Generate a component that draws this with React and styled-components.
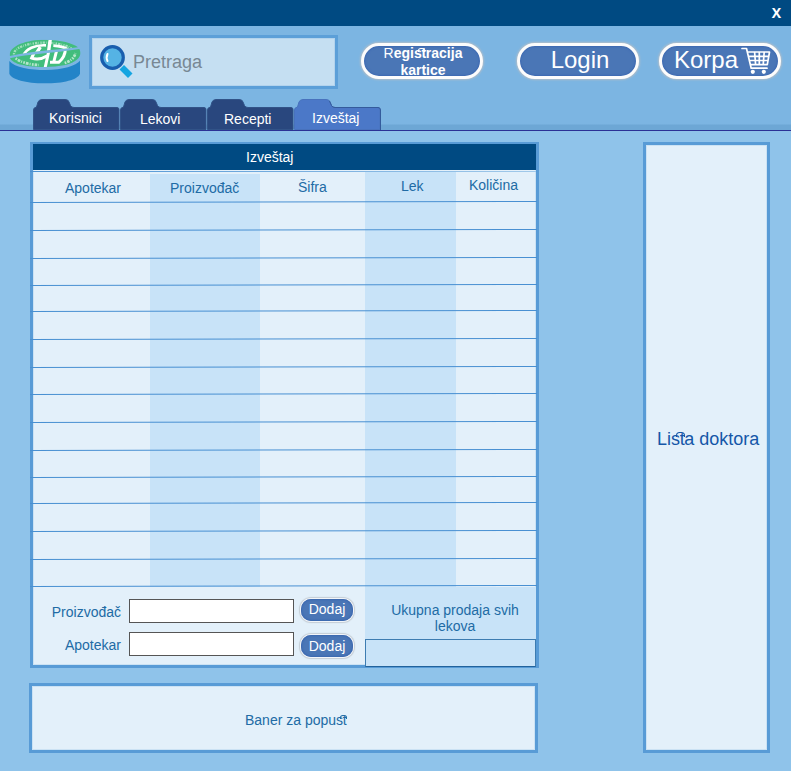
import React from "react";
import styled, { createGlobalStyle } from "styled-components";

const GlobalStyle = createGlobalStyle`
  * { box-sizing: border-box; }
  body { margin: 0; font-family: "Liberation Sans", Arial, sans-serif; font-size: 14px; line-height: 16px; }
`;

const Window = styled.div`
  width: 791px;
  height: 771px;
  display: flex;
  flex-direction: column;
  overflow: hidden;
  background: #8fc3ea;
`;

const TitleBar = styled.div`
  height: 26px;
  flex: none;
  display: flex;
  justify-content: flex-end;
  padding: 5px 10px 0 0;
  background: #004a82;
`;

const CloseButton = styled.button`
  border: 0;
  padding: 0;
  height: 16px;
  background: none;
  color: #fff;
  font: bold 14px/16px "Open Sans", "Liberation Sans", sans-serif;
`;

const Header = styled.header`
  height: 105px;
  flex: none;
  display: flex;
  flex-direction: column;
  justify-content: space-between;
  border-bottom: 1px solid #2b3196;
  background: linear-gradient(#7cb5e2 98px, #6da7d5 99px);
`;

const Toolbar = styled.div`
  display: flex;
  align-items: flex-start;
  padding-left: 8px;
`;

const LogoBox = styled.div`
  width: 74px;
  height: 47px;
  margin: 12px 7px 0 0;
  svg { display: block; }
`;

const Search = styled.label`
  width: 249px;
  height: 54px;
  margin: 9px 23px 0 0;
  padding: 7px 0 0 8px;
  display: flex;
  border: 3px solid #5c9fd8;
  box-shadow: inset 0 0 0 1px #b3d3ed;
  background: #c5dff2;
  color: #788894;
  font-size: 18px;
  line-height: 20px;
  svg { display: block; flex: none; }
`;

const SearchText = styled.span`
  padding-top: 7px;
`;

const Pill = styled.button`
  width: 122px;
  height: 36px;
  margin: 17px ${(p) => p.$gap || 0}px 0 0;
  padding: ${(p) => p.$pad || "0"};
  display: flex;
  align-items: flex-start;
  justify-content: ${(p) => (p.$start ? "flex-start" : "center")};
  border: 3px solid #fcfcfc;
  border-radius: 18px;
  background: #4a76b6;
  box-shadow: 0 0 2px 1px #b2bec9, inset 0 0 2px 1px #3e69b2;
  color: #fff;
  font: ${(p) => (p.$small ? "bold 14px/17px" : "24px/28px")} "Liberation Sans", Arial, sans-serif;
  white-space: nowrap;
  svg { display: block; flex: none; }
`;

const PillLines = styled.span`
  margin-top: -1px;
`;

const CartSlot = styled.span`
  margin: 1px 0 0 3px;
`;

const Light = styled.span`
  font-weight: 400;
`;

/* "st" pair joined by a small arch above the letters */
const Ligature = styled.span`
  position: relative;
  letter-spacing: -0.02em;
  &::after {
    content: "";
    position: absolute;
    left: 0.28em;
    top: 3px;
    width: 0.36em;
    height: 0.22em;
    border: ${(p) => p.$weight || 1}px solid currentColor;
    border-bottom: 0;
    border-radius: 0.2em 0.2em 0 0;
  }
`;

const Tabs = styled.nav`
  display: flex;
  padding-left: 33px;
  height: 31px;
`;

const Tab = styled.div`
  width: 87px;
  height: 31px;
  display: grid;
  color: #fff;
  > * { grid-area: 1 / 1; }
  svg { display: block; }
`;

const TabText = styled.span`
  z-index: 1;
  padding: ${(p) => p.$top}px 0 0 ${(p) => p.$left}px;
`;

const Content = styled.main`
  display: flex;
  justify-content: space-between;
  padding: 11px 21px 0 29px;
`;

const MainColumn = styled.div`
  display: flex;
  flex-direction: column;
  gap: 15px;
`;

const Report = styled.section`
  width: 509px;
  height: 526px;
  margin-left: 1px;
  border: solid #589bd6;
  border-width: 2px 3px 3px;
  background: #e3f0fa;
  box-shadow: inset 0 0 0 1px #cbe2f4;
`;

const ReportTitle = styled.h1`
  margin: 0 0 1px;
  height: 26px;
  padding: 5px 0 0 213px;
  background: #004a82;
  color: #fff;
  font-size: 14px;
  font-weight: 400;
  line-height: 16px;
`;

const Row = styled.div`
  position: relative;
  height: ${(p) => p.$height}px;
  padding: 0 1px;
  display: grid;
  grid-template-columns: 116px 110px 105px 91px 79px;
  color: #216ba5;
  &::after {
    content: "";
    position: absolute;
    left: -3px;
    right: -1px;
    bottom: 1px;
    height: 1px;
    background: #4990d2;
    transform: translateY(0.5px) rotate(-0.11deg);
  }
`;

const HeadRule = styled.div`
  height: 1px;
  margin-left: -3px;
  background: linear-gradient(90deg, #4990d2, #a1c9ea);
`;

const Cell = styled.div`
  margin-top: ${(p) => p.$inset || 0}px;
  padding: ${(p) => p.$top || 0}px 0 0 ${(p) => p.$left || 0}px;
  background: ${(p) => (p.$shade ? "#c8e3f8" : "transparent")};
`;

const ReportFooter = styled.div`
  height: 80px;
  margin-top: -1px;
  display: grid;
  grid-template-columns: 332px 171px;
  color: #216ba5;
`;

const Entries = styled.div`
  display: flex;
  flex-direction: column;
  gap: 9px;
  padding-top: 13px;
`;

const Entry = styled.div`
  height: 24px;
  display: grid;
  grid-template-columns: 88px 165px 52px;
  align-items: start;
  column-gap: 8px;
`;

const EntryLabel = styled.label`
  padding-top: 5px;
  text-align: right;
`;

const EntryInput = styled.input`
  width: 165px;
  height: 24px;
  padding: 2px 4px;
  border: 1px solid #555;
  border-radius: 0;
  background: #fff;
  font: 14px "Liberation Sans", Arial, sans-serif;
`;

const AddButton = styled.button`
  width: 52px;
  height: 22px;
  margin: ${(p) => p.$top}px 0 0 -1px;
  padding: 0 0 ${(p) => p.$lift || 0}px;
  border: 0;
  border-radius: 10px;
  background: #4a76b6;
  box-shadow: inset 0 0 2px 1px #3b68b0, 0 0 0 1px #f2f5f9, 0 0 1px 2px #c4cdd5;
  color: #fff;
  font: 14px/16px "Liberation Sans", Arial, sans-serif;
`;

const Total = styled.div`
  height: 81px;
  background: linear-gradient(transparent 1px, #c8e3f8 1px);
  display: flex;
  flex-direction: column;
  justify-content: space-between;
  padding-top: 16px;
  text-align: center;
`;

const TotalText = styled.span`
  padding-left: 9px;
`;

const TotalBox = styled.div`
  position: relative;
  height: 28px;
  border: 1px solid #3d7cb1;
  border-bottom-color: #22639c;
`;

const Banner = styled.section`
  width: 509px;
  height: 70px;
  padding: 26px 0 0 213px;
  border: 3px solid #589bd6;
  background: #e3f0fa;
  box-shadow: inset 0 0 0 1px #cbe2f4;
  color: #216ba5;
`;

const Doctors = styled.aside`
  width: 127px;
  height: 611px;
  padding: 284px 0 0 11px;
  border: 3px solid #589bd6;
  background: #e3f0fa;
  box-shadow: inset 0 0 0 1px #cbe2f4;
  color: #1557a8;
  font-size: 18px;
  line-height: 20px;
  white-space: nowrap;
`;

function Logo() {
  return (
    <svg width="74" height="47" viewBox="24 39 222 141">
      <defs>
        <clipPath id="face-back">
          <path d="M29 88C32 62 78 44 136 44C184 45 218 54 234 67C184 73 110 76 29 93Z" />
        </clipPath>
        <clipPath id="face-front">
          <path d="M30 100C82 86 170 84 238 72C248 90 236 110 196 120C148 130 86 126 52 116C38 110 33 105 30 100Z" />
        </clipPath>
      </defs>
      <path d="M28 108C44 128 92 135 136 135C190 134 228 122 240 107V146C234 164 190 175 134 175C78 175 34 163 28 146Z" fill="#2384c8" />
      <g clipPath="url(#face-back)">
        <rect x="24" y="40" width="222" height="60" fill="#42bd7d" />
        <ellipse cx="134" cy="87" rx="92" ry="34" fill="none" stroke="#a0dfbc" strokeWidth="7" strokeDasharray="4 3 7 3 2 4" />
        <path d="M70 93C76 72 106 59 138 61M160 62C178 63 194 67 204 74" fill="none" stroke="#fff" strokeWidth="8" />
        <path d="M151 42L145 84M121 66L106 90" fill="none" stroke="#fff" strokeWidth="10" />
      </g>
      <g clipPath="url(#face-front)">
        <rect x="24" y="70" width="222" height="60" fill="#42bd7d" />
        <path d="M47 100C64 114 94 119 116 120M194 114C212 108 224 98 226 84" fill="none" stroke="#b5e6cb" strokeWidth="8" strokeDasharray="5 3 8 3 3 4" />
        <path d="M102 84L95 99C108 104 126 102 142 92M146 80L135 130M170 76L162 108M196 72C196 88 188 102 176 112H150" fill="none" stroke="#fff" strokeWidth="9" />
      </g>
    </svg>
  );
}

function SearchIcon() {
  return (
    <svg width="33" height="34" viewBox="0 0 33 34">
      <path d="M19.5 24.5L24 20L32.5 28.5L28 33Z" fill="#15a5e1" />
      <circle cx="12.5" cy="12.5" r="10.8" fill="#55b3e4" stroke="#195eae" strokeWidth="3.2" />
      <path d="M7.5 9Q5.8 12.5 7.5 16" fill="none" stroke="#fff" strokeWidth="2" strokeLinecap="round" />
    </svg>
  );
}

function CartIcon() {
  return (
    <svg width="30" height="28" viewBox="0 0 30 28" fill="none" stroke="#fff" strokeWidth="1.7" strokeLinecap="round" strokeLinejoin="round">
      <path d="M1 1.5H5.5L10.2 21.2H26M6.5 5H28.5L26.3 17.6H9.5M7.3 9.3H27.7M8.4 13.5H27M13.6 5L14.6 17.6M18.3 5V17.6M23.2 5L22.2 17.6" />
      <g fill="#fff" stroke="none">
        <circle cx="11.8" cy="24.8" r="2.1" />
        <circle cx="22.8" cy="24.8" r="2.1" />
      </g>
    </svg>
  );
}

function FolderTab({ label, left, top, active }) {
  return (
    <Tab>
      <svg width="87" height="31" viewBox="0 0 87 31">
        <path
          d="M.5 30.5V11Q.5 8.5 3.5 8L5 3Q6 .5 9 .5H32Q35.5 .5 36 3L37.5 6.5Q38.4 8.5 41 8.5H84Q86 8.5 86 10.5V30.5Z"
          fill={active ? "#4b78c8" : "#29477e"}
          stroke={active ? "#4872bd" : "#315388"}
          strokeWidth="1"
        />
        {active && <path d="M35.5 2L37.5 6.5Q38.4 8.5 41 8.5H84Q86.5 8.5 86.5 11V31" fill="none" stroke="#345b9c" strokeWidth="1" />}
      </svg>
      <TabText $left={left} $top={top}>{label}</TabText>
    </Tab>
  );
}

const tabs = [
  { label: "Korisnici", left: 16, top: 11 },
  { label: "Lekovi", left: 20, top: 12 },
  { label: "Recepti", left: 17, top: 12 },
  { label: "Izveštaj", left: 18, top: 11, active: true },
];

const columns = [
  { label: "Apotekar", left: 31, top: 8 },
  { label: "Proizvođač", left: 20, top: 6, shade: true, inset: 2 },
  { label: "Šifra", left: 38, top: 7 },
  { label: "Lek", left: 36, top: 6, shade: true },
  { label: "Količina", left: 13, top: 5 },
];

const rowHeights = [28, 28, 27, 26, 28, 28, 27, 28, 28, 27, 26, 28, 28, 27];

export default function App() {
  return (
    <Window>
      <GlobalStyle />
      <TitleBar><CloseButton>X</CloseButton></TitleBar>
      <Header>
        <Toolbar>
          <LogoBox><Logo /></LogoBox>
          <Search><SearchIcon /><SearchText>Pretraga</SearchText></Search>
          <Pill $small $gap={34} $pad="0 0 0 2px">
            <PillLines><Light>R</Light>egi<Ligature $weight={1.5}>st</Ligature>racija<br />kartice</PillLines>
          </Pill>
          <Pill $gap={20} $pad="0 0 0 4px">Login</Pill>
          <Pill $start $pad="0 0 0 12px">Korpa<CartSlot><CartIcon /></CartSlot></Pill>
        </Toolbar>
        <Tabs>{tabs.map((t) => <FolderTab key={t.label} {...t} />)}</Tabs>
      </Header>
      <Content>
        <MainColumn>
          <Report>
            <ReportTitle>Izveštaj</ReportTitle>
            <HeadRule />
            <Row $height={31}>
              {columns.map((c) => (
                <Cell key={c.label} $shade={c.shade} $inset={c.inset} $left={c.left} $top={c.top}>{c.label}</Cell>
              ))}
            </Row>
            {rowHeights.map((h, i) => (
              <Row key={i} $height={h}>
                {columns.map((c) => <Cell key={c.label} $shade={c.shade} />)}
              </Row>
            ))}
            <ReportFooter>
              <Entries>
                <Entry>
                  <EntryLabel htmlFor="maker">Proizvođač</EntryLabel>
                  <EntryInput id="maker" />
                  <AddButton $top={0} $lift={2}>Dodaj</AddButton>
                </Entry>
                <Entry>
                  <EntryLabel htmlFor="pharmacist">Apotekar</EntryLabel>
                  <EntryInput id="pharmacist" />
                  <AddButton $top={3}>Dodaj</AddButton>
                </Entry>
              </Entries>
              <Total>
                <TotalText>Ukupna prodaja svih<br />lekova</TotalText>
                <TotalBox />
              </Total>
            </ReportFooter>
          </Report>
          <Banner>Baner za popu<Ligature>st</Ligature></Banner>
        </MainColumn>
        <Doctors>Li<Ligature>st</Ligature>a doktora</Doctors>
      </Content>
    </Window>
  );
}
